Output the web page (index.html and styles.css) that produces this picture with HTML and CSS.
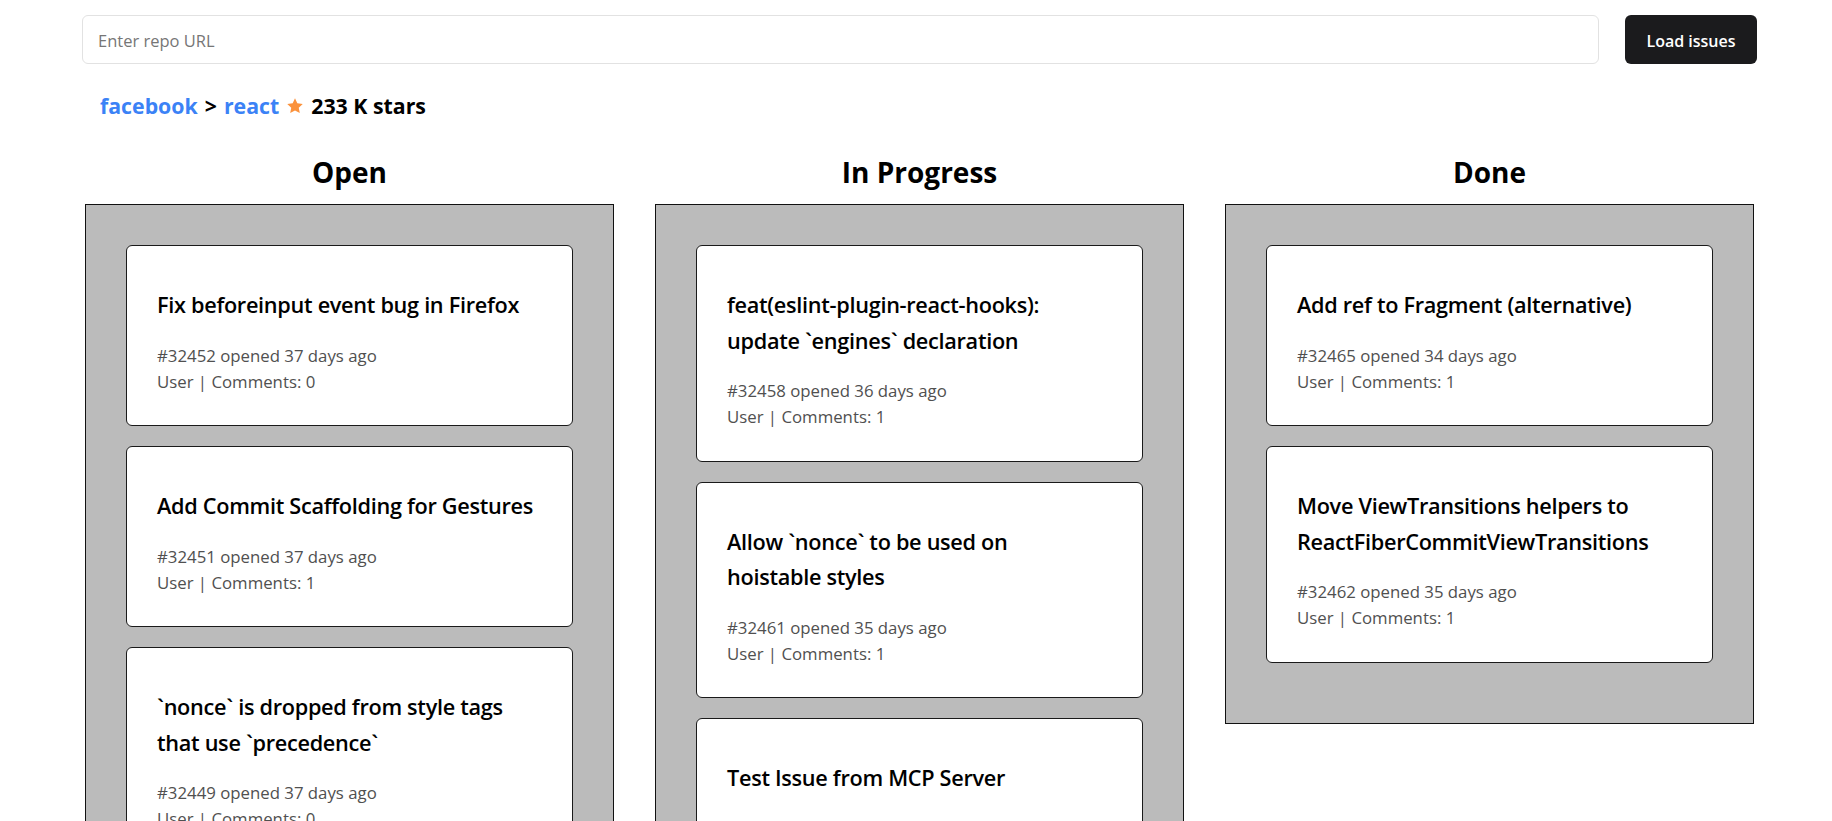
FILE: index.html
```html
<!DOCTYPE html>
<html lang="en">
<head>
<meta charset="utf-8">
<title>Issues board</title>
<link rel="stylesheet" href="styles.css">
</head>
<body>
<div class="app">
  <form class="topbar">
    <input class="repo-input" type="text" placeholder="Enter repo URL">
    <button class="load-btn" type="button">Load issues</button>
  </form>

  <div class="repo">
    <a class="repo-link" href="#">facebook</a>
    <span class="sep">&gt;</span>
    <a class="repo-link" href="#">react</a>
    <svg class="star" viewBox="0 0 24 24" width="18" height="18" aria-hidden="true"><path d="M12 1.8l3.1 6.6 7.2.9-5.3 5 1.4 7.1L12 17.9l-6.4 3.5 1.4-7.1-5.3-5 7.2-.9z"/></svg>
    <span class="stars">233 K stars</span>
  </div>

  <div class="board">
    <section class="column">
      <h2 class="column-title">Open</h2>
      <div class="column-body">
        <article class="card">
          <h3 class="card-title">Fix beforeinput event bug in Firefox</h3>
          <p class="card-meta">#32452 opened 37 days ago</p>
          <p class="card-meta">User | Comments: 0</p>
        </article>
        <article class="card">
          <h3 class="card-title">Add Commit Scaffolding for Gestures</h3>
          <p class="card-meta">#32451 opened 37 days ago</p>
          <p class="card-meta">User | Comments: 1</p>
        </article>
        <article class="card">
          <h3 class="card-title">`nonce` is dropped from style tags that use `precedence`</h3>
          <p class="card-meta">#32449 opened 37 days ago</p>
          <p class="card-meta">User | Comments: 0</p>
        </article>
      </div>
    </section>

    <section class="column">
      <h2 class="column-title">In Progress</h2>
      <div class="column-body">
        <article class="card">
          <h3 class="card-title">feat(eslint-plugin-react-hooks): update `engines` declaration</h3>
          <p class="card-meta">#32458 opened 36 days ago</p>
          <p class="card-meta">User | Comments: 1</p>
        </article>
        <article class="card">
          <h3 class="card-title">Allow `nonce` to be used on<br>hoistable styles</h3>
          <p class="card-meta">#32461 opened 35 days ago</p>
          <p class="card-meta">User | Comments: 1</p>
        </article>
        <article class="card">
          <h3 class="card-title">Test Issue from MCP Server</h3>
          <p class="card-meta">#32470 opened 34 days ago</p>
          <p class="card-meta">User | Comments: 0</p>
        </article>
      </div>
    </section>

    <section class="column">
      <h2 class="column-title">Done</h2>
      <div class="column-body">
        <article class="card">
          <h3 class="card-title">Add ref to Fragment (alternative)</h3>
          <p class="card-meta">#32465 opened 34 days ago</p>
          <p class="card-meta">User | Comments: 1</p>
        </article>
        <article class="card">
          <h3 class="card-title">Move ViewTransitions helpers to ReactFiberCommitViewTransitions</h3>
          <p class="card-meta">#32462 opened 35 days ago</p>
          <p class="card-meta">User | Comments: 1</p>
        </article>
      </div>
    </section>
  </div>
</div>
</body>
</html>
```

FILE: styles.css
```css
* { box-sizing: border-box; }

html, body {
  margin: 0;
  background: #ffffff;
  color: #000000;
  font-family: "Open Sans", "Noto Sans", sans-serif;
}

.app {
  padding: 15px 0 0 0;
}

.topbar {
  display: flex;
  gap: 26px;
  margin: 0 75px 0 82px;
}

.repo-input {
  flex: 1;
  height: 49px;
  padding: 2px 15px 0 15px;
  border: 1px solid #e2e2e2;
  border-radius: 6px;
  font-family: inherit;
  font-size: 16.5px;
  color: #111;
  outline: none;
}
.repo-input::placeholder { color: #767676; }

.load-btn {
  width: 132px;
  height: 49px;
  padding: 2px 0 0 0;
  border: none;
  border-radius: 6px;
  background: #1b1b1d;
  color: #ffffff;
  font-family: inherit;
  font-size: 16px;
  font-weight: 600;
  cursor: pointer;
}

.repo {
  display: flex;
  align-items: center;
  gap: 7px;
  margin-top: 28px;
  padding-left: 100px;
  height: 28px;
  font-size: 21.3px;
  font-weight: 700;
  line-height: 28px;
}
.repo-link { color: #3b82f6; text-decoration: none; }
.sep { color: #000; }
.star { fill: #fb923c; }
.stars { color: #000; }

.board {
  display: grid;
  grid-template-columns: repeat(3, 529px);
  column-gap: 41px;
  align-items: start;
  padding-left: 85px;
  margin-top: 34px;
}

.column-title {
  margin: 0 0 14px 0;
  text-align: center;
  font-size: 28px;
  font-weight: 700;
  line-height: 36px;
}

.column-body {
  background: #bbbbbb;
  border: 1px solid #111;
  padding: 40px;
}

.card {
  background: #ffffff;
  border: 1px solid #1a1a1a;
  border-radius: 6px;
  padding: 41px 30px 30px 30px;
  margin-bottom: 20px;
}

.card-title {
  margin: 0 0 20px 0;
  font-size: 21.7px;
  font-weight: 600;
  letter-spacing: -0.3px;
  line-height: 35.5px;
  color: #000;
}

.card-meta {
  margin: 0;
  font-size: 16.8px;
  line-height: 26.25px;
  color: #505050;
}
```
